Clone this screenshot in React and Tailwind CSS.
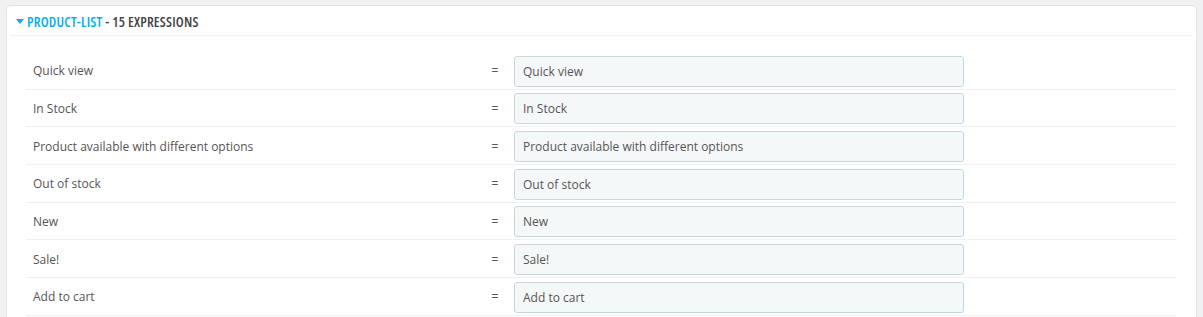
const ROWS = [
  'Quick view',
  'In Stock',
  'Product available with different options',
  'Out of stock',
  'New',
  'Sale!',
  'Add to cart',
]

export default function App() {
  return (
    <div className="min-h-[317px] bg-[#eff1f2] pt-[5px] pl-[6px] pr-[6px] font-['Open_Sans',sans-serif] text-[12px] text-[#555]">
      <div className="rounded-[5px] border border-[#e2e4e5] bg-white px-[3px] pb-10">
        {/* Heading */}
        <div className="flex h-[30px] items-center border-b border-[#eef0f1] pl-[6px] pt-[1px] font-['Open_Sans',sans-serif] text-[14px] font-semibold uppercase tracking-[0.2px] [font-stretch:81%]">
          <svg width="8" height="5" viewBox="0 0 8 5" className="mr-[3px]">
            <path d="M0 0 H8 L4 5 Z" fill="#00aff0" />
          </svg>
          <span className="text-[#00aff0]">product-list</span>
          <span className="ml-[3px] text-[#444]">- 15 expressions</span>
        </div>

        {/* Expressions */}
        <div className="ml-[16px] mr-[16px] mt-[16px]">
          {ROWS.map((label) => (
            <div key={label} className="flex h-[37.67px] items-center border-b border-[#eef0f1] pt-[2px]">
              <div className="w-[454px] pl-[7px]">{label}</div>
              <div className="w-[30px] text-center">=</div>
              <input
                readOnly
                value={label}
                className="ml-[4px] h-[31px] w-[450px] rounded-[3px] border border-[#c7d6db] bg-[#f5f8f9] px-[8px] text-[12px] text-[#555] outline-none"
              />
            </div>
          ))}
        </div>
      </div>
    </div>
  )
}
